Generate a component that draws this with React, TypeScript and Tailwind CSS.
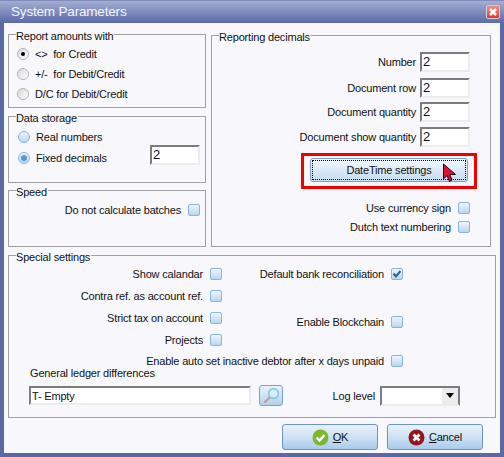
import type { ReactNode } from "react";

function Group({ title, className, children }: { title: string; className: string; children: ReactNode }) {
  return (
    <div className={`relative border border-[#a0a0a0] ${className}`}>
      <span className="absolute left-[7px] top-[-6px] bg-[#f8f8fc] pr-px leading-[14px]">{title}</span>
      {children}
    </div>
  );
}

function Check({ checked }: { checked?: boolean }) {
  return (
    <span className="flex h-[12px] w-[12px] shrink-0 items-center justify-center rounded-[2px] border border-[#85b5e0] bg-gradient-to-b from-[#eef5fc] to-[#bcd7f0]">
      {checked && (
        <svg width="10" height="10" viewBox="0 0 10 10">
          <path d="M1.5 4.5 L4 7.5 L8.5 2" fill="none" stroke="#2c5f9e" strokeWidth="2" />
        </svg>
      )}
    </span>
  );
}

function CheckRow({ label, checked, className = "" }: { label: string; checked?: boolean; className?: string }) {
  return (
    <div className={`flex h-[12px] items-center justify-end gap-[7px] whitespace-nowrap ${className}`}>
      <span>{label}</span>
      <Check checked={checked} />
    </div>
  );
}

function Radio({ label, selected, blue }: { label: string; selected?: boolean; blue?: boolean }) {
  return (
    <div className="flex h-[12px] items-center gap-[6px] whitespace-pre">
      <span
        className={`flex h-[12px] w-[12px] shrink-0 items-center justify-center rounded-full border ${
          blue
            ? "border-[#85b5e0] bg-gradient-to-b from-[#eef5fc] to-[#bcd7f0]"
            : "border-[#b4b4b4] bg-gradient-to-br from-[#d8d8d8] to-[#ffffff]"
        }`}
      >
        {selected && <span className={`rounded-full ${blue ? "h-[6px] w-[6px] bg-[#5b96d2]" : "h-[4px] w-[4px] bg-black"}`} />}
      </span>
      <span>{label}</span>
    </div>
  );
}

function Field({ value, className }: { value?: string; className: string }) {
  return (
    <div className={`flex items-center border-2 border-t-[#7c7c7c] border-l-[#7c7c7c] border-r-[#ececec] border-b-[#ececec] bg-white pl-[1px] ${className}`}>
      {value}
    </div>
  );
}

function NumberRow({ label, className = "" }: { label: string; className?: string }) {
  return (
    <div className={`flex items-center justify-end gap-[4px] ${className}`}>
      <span>{label}</span>
      <Field value="2" className="h-[20px] w-[50px] text-[13px]" />
    </div>
  );
}

function DialogButton({ children }: { children: ReactNode }) {
  return (
    <button className="flex h-[26px] w-[96px] items-center justify-center gap-[4px] rounded-[3px] border border-[#6c93c4] bg-gradient-to-b from-[#e8f2fb] via-[#cfe2f4] to-[#a9cbea]">
      {children}
    </button>
  );
}

export default function App() {
  return (
    <div className="flex h-[457px] w-[504px] flex-col overflow-hidden bg-[#5a68a6] text-[11px] leading-[14px] tracking-[-0.18px] text-[#111] [font-family:'Liberation_Sans',sans-serif]">
      <div className="flex h-[23px] shrink-0 items-center justify-between border-t border-[#7f8cbc] bg-gradient-to-b from-[#a4aed0] to-[#5c6aa8] pl-[11px] pr-[4px]">
        <span className="text-[13.5px] text-[#f4f5fb]">System Parameters</span>
        <span className="flex h-[14px] w-[14px] items-center justify-center rounded-[2px] border border-[#c9d0e6] bg-gradient-to-b from-[#f58a80] to-[#e5322a]">
          <svg width="10" height="10" viewBox="0 0 10 10">
            <path d="M2 2 L8 8 M8 2 L2 8" stroke="#fff" strokeWidth="2.6" />
          </svg>
        </span>
      </div>

      <div className="mx-[4px] mb-[4px] flex flex-1 flex-col bg-[#f8f8fc] px-[4px] pt-[11px]">
        <div className="flex gap-[5px]">
          <div className="flex w-[198px] flex-col">
            <Group title="Report amounts with" className="flex h-[74px] flex-col gap-[8px] pl-[8px] pt-[13px]">
              <Radio label="<>  for Credit" selected />
              <Radio label="+/-  for Debit/Credit" />
              <Radio label="D/C for Debit/Credit" />
            </Group>

            <Group title="Data storage" className="mt-[8px] flex h-[67px] items-start pl-[9px] pt-[14px]">
              <div className="flex w-[132px] flex-col gap-[9px]">
                <Radio label="Real numbers" blue />
                <Radio label="Fixed decimals" blue selected />
              </div>
              <Field value="2" className="mt-[14px] h-[20px] w-[50px] text-[13px]" />
            </Group>

            <Group title="Speed" className="mt-[7px] h-[57px] pr-[5px] pt-[13px]">
              <CheckRow label="Do not calculate batches" className="gap-[5px]" />
            </Group>
          </div>

          <Group title="Reporting decimals" className="mt-px h-[212px] w-[280px] pr-[20px] pt-[16px]">
            <div className="flex flex-col">
              <NumberRow label="Number" />
              <NumberRow label="Document row" className="mt-[6px]" />
              <NumberRow label="Document quantity" className="mt-[4px]" />
              <NumberRow label="Document show quantity" className="mt-[5px]" />
            </div>
            <div className="relative ml-[89px] mt-[6px] w-[176px] border-[3px] border-[#f00000] px-[6px] pb-[4px] pt-[2px]">
              <button className="flex h-[24px] w-full items-center justify-center rounded-[3px] border border-[#7f9fcb] bg-gradient-to-b from-[#f3f8fd] to-[#c4dcf2] p-px">
                <span className="flex h-full w-full items-center justify-center border border-dotted border-black">
                  DateTime settings
                </span>
              </button>
              <svg className="absolute left-[138px] top-[7px]" width="15" height="20" viewBox="0 0 15 20">
                <path d="M1.5 1 V16 L5 12.5 L7.5 18.5 L10 17 L7.8 11.5 L13.5 11.5 Z" fill="#e0102c" stroke="#2a0008" strokeWidth="1" />
              </svg>
            </div>
            <CheckRow label="Use currency sign" className="mt-[13px]" />
            <CheckRow label="Dutch text numbering" className="mt-[7px]" />
          </Group>
        </div>

        <Group title="Special settings" className="mt-[8px] h-[163px] pl-[20px] pt-[12px]">
          <div className="flex items-start">
            <div className="flex w-[193px] flex-col gap-[10px]">
              <CheckRow label="Show calandar" />
              <CheckRow label="Contra ref. as account ref." />
              <CheckRow label="Strict tax on account" />
              <CheckRow label="Projects" />
            </div>
            <div className="flex w-[181px] flex-col">
              <CheckRow label="Default bank reconciliation" checked />
              <CheckRow label="Enable Blockchain" className="mt-[36px]" />
            </div>
          </div>
          <CheckRow label="Enable auto set inactive debtor after x days unpaid" className="mt-[9px] w-[374px]" />
          <div className="whitespace-nowrap pl-px leading-[13px]">General ledger differences</div>
          <div className="mt-[5px] flex items-center">
            <Field value="T- Empty" className="h-[19px] w-[222px]" />
            <button className="ml-[8px] flex h-[21px] w-[24px] items-center justify-center rounded-[3px] border border-[#7f9fcb] bg-gradient-to-b from-[#e8f2fb] to-[#b4d1ec]">
              <svg width="18" height="18" viewBox="0 0 18 18">
                <path d="M9 9 L2.5 15.5" stroke="#d08f96" strokeWidth="2" />
                <circle cx="11.5" cy="6.5" r="4.8" fill="#d6f0fb" stroke="#7cc0e4" strokeWidth="1.4" />
              </svg>
            </button>
            <span className="w-[92px] text-right">Log level</span>
            <div className="ml-[5px] flex h-[20px] w-[80px] items-center justify-end border-2 border-t-[#7c7c7c] border-l-[#7c7c7c] border-r-[#7c7c7c] border-b-[#ececec] bg-white">
              <span className="flex h-full w-[16px] items-center justify-center bg-[#ececec]">
                <svg width="8" height="5" viewBox="0 0 8 5">
                  <path d="M0 0 H8 L4 5 Z" fill="#000" />
                </svg>
              </span>
            </div>
          </div>
        </Group>

        <div className="mt-[6px] flex justify-end gap-[9px] pr-[13px]">
          <DialogButton>
            <svg width="17" height="17" viewBox="0 0 17 17">
              <circle cx="8.5" cy="8.5" r="8" fill="#7ab82e" />
              <path d="M4.5 8.5 L7.5 11.5 L12.5 6" fill="none" stroke="#fff" strokeWidth="2.4" />
            </svg>
            <span><span className="underline">O</span>K</span>
          </DialogButton>
          <DialogButton>
            <svg width="17" height="17" viewBox="0 0 17 17">
              <circle cx="8.5" cy="8.5" r="8" fill="#97161c" />
              <path d="M5.5 5.5 L11.5 11.5 M11.5 5.5 L5.5 11.5" stroke="#fff" strokeWidth="2.8" />
            </svg>
            <span><span className="underline">C</span>ancel</span>
          </DialogButton>
        </div>
      </div>
    </div>
  );
}
